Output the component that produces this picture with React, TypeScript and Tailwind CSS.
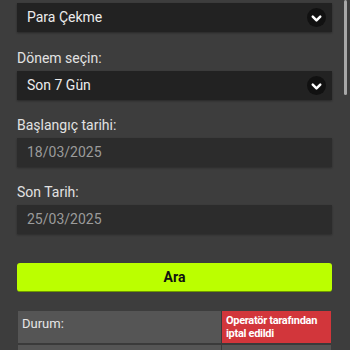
import { ChevronDown } from 'lucide-react'

function Select({ value }: { value: string }) {
  return (
    <div className="flex h-[29px] items-center justify-between bg-[#222222] pl-[10px] pr-[6px] shadow-[0_1px_2px_rgba(0,0,0,0.35)]">
      <span className="text-[14px] text-[#ececec]">{value}</span>
      <span className="flex h-[19px] w-[19px] items-center justify-center rounded-full bg-[#111111]">
        <ChevronDown className="mt-[1px] h-[15px] w-[15px] text-white" strokeWidth={4} />
      </span>
    </div>
  )
}

function DateInput({ value }: { value: string }) {
  return (
    <div className="flex h-[29px] items-center bg-[#2c2c2c] pl-[10px] shadow-[0_1px_2px_rgba(0,0,0,0.3)]">
      <span className="text-[14px] text-[#9b9b9b]">{value}</span>
    </div>
  )
}

function Label({ children }: { children: string }) {
  return <p className="mb-[3px] h-[20px] text-[14px] leading-[20px] text-[#e2e2e2]">{children}</p>
}

export default function App() {
  return (
    <div className="relative h-[350px] w-[350px] overflow-hidden bg-[#3d3d3d] font-['Roboto',sans-serif]">
      <div className="absolute right-[3px] top-0 h-[95px] w-[3px] rounded-full bg-[#a8a8a8]" />
      <div className="pl-[17px] pr-[18px] pt-[3px]">
        <Select value="Para Çekme" />

        <div className="mt-[16px]">
          <Label>Dönem seçin:</Label>
          <Select value="Son 7 Gün" />
        </div>

        <div className="mt-[15px]">
          <Label>Başlangıç tarihi:</Label>
          <DateInput value="18/03/2025" />
        </div>

        <div className="mt-[15px]">
          <Label>Son Tarih:</Label>
          <DateInput value="25/03/2025" />
        </div>

        <button className="mt-[29px] flex h-[29px] w-full items-center justify-center rounded-[3px] border-b border-[#6f9a00] bg-[#bbff00] text-[14px] font-bold text-[#111111]">
          Ara
        </button>

        <div className="mt-[19px] ml-[1px] mr-[1px]">
          <div className="flex border-b-2 border-[#3a3a3a]">
            <div className="flex-1 bg-[#555555] px-[4px] pt-[5px] text-[13px] leading-[16px] text-[#e6e6e6]">
              Durum:
            </div>
            <div className="w-[110px] border-l border-[#3a3a3a] bg-[#d2363b] px-[4px] pb-[3px] pt-[3px] text-[11px] font-bold leading-[13px] tracking-[-0.3px] text-white">
              Operatör tarafından iptal edildi
            </div>
          </div>
          <div className="flex h-[20px]">
            <div className="flex-1 bg-[#555555]" />
            <div className="w-[110px] border-l border-[#3a3a3a] bg-[#555555]" />
          </div>
        </div>
      </div>
    </div>
  )
}
